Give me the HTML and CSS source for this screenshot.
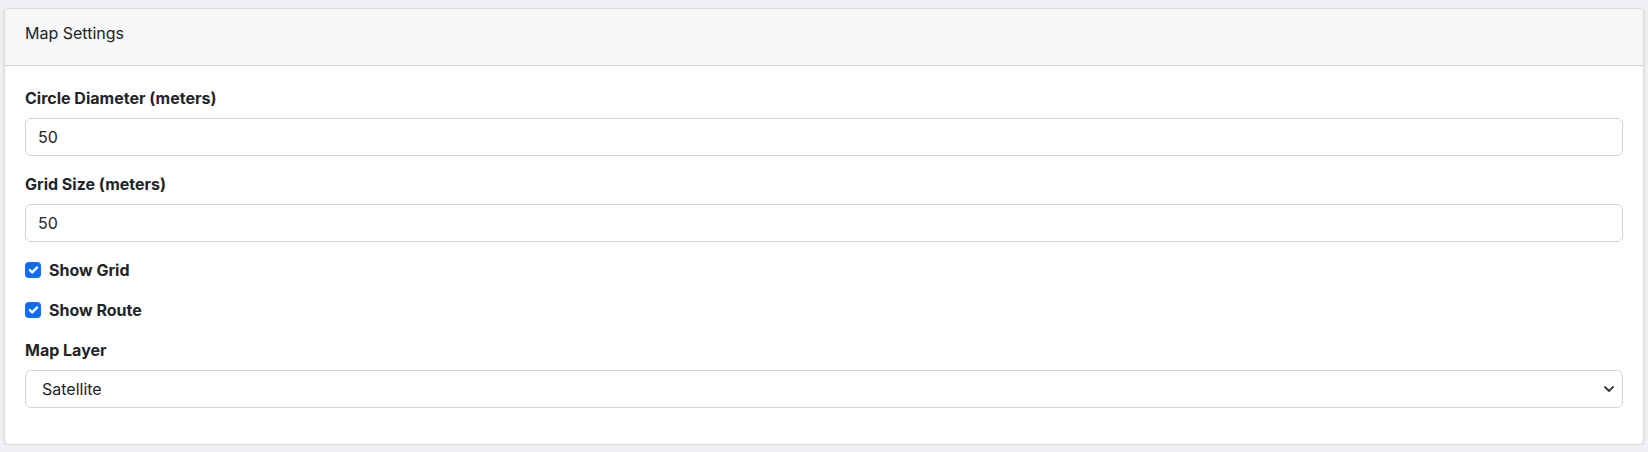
FILE: index.html
```html
<!DOCTYPE html>
<html lang="en">
<head>
<meta charset="utf-8">
<title>Map Settings</title>
<link rel="stylesheet" href="styles.css">
</head>
<body>
<div class="card">
  <div class="card-header">
    <h6 class="card-title">Map Settings</h6>
  </div>
  <div class="card-body">
    <div class="field">
      <label class="form-label" for="diam">Circle Diameter (meters)</label>
      <input class="form-control" id="diam" type="text" value="50">
    </div>
    <div class="field">
      <label class="form-label" for="grid">Grid Size (meters)</label>
      <input class="form-control" id="grid" type="text" value="50">
    </div>
    <label class="form-check">
      <input class="check-input" type="checkbox" checked>
      <span class="check-box"><svg viewBox="0 0 20 20" width="16" height="16"><path d="m6 10 3 3 6-6" fill="none" stroke="#fff" stroke-width="3" stroke-linecap="round" stroke-linejoin="round"/></svg></span>
      <span class="check-label">Show Grid</span>
    </label>
    <label class="form-check">
      <input class="check-input" type="checkbox" checked>
      <span class="check-box"><svg viewBox="0 0 20 20" width="16" height="16"><path d="m6 10 3 3 6-6" fill="none" stroke="#fff" stroke-width="3" stroke-linecap="round" stroke-linejoin="round"/></svg></span>
      <span class="check-label">Show Route</span>
    </label>
    <div class="field">
      <label class="form-label" for="layer">Map Layer</label>
      <div class="select-wrap">
        <select class="form-select" id="layer">
          <option>Satellite</option>
          <option>Streets</option>
          <option>Terrain</option>
        </select>
        <svg class="select-arrow" viewBox="0 0 10 6" width="10" height="6"><path d="M1 1l4 4 4-4" fill="none" stroke="#343a40" stroke-width="1.8" stroke-linecap="round" stroke-linejoin="round"/></svg>
      </div>
    </div>
  </div>
</div>
</body>
</html>
```

FILE: styles.css
```css
* { box-sizing: border-box; }
html, body { margin: 0; padding: 0; }
body {
  background: #eef0f3;
  font-family: Inter, "Liberation Sans", Arial, sans-serif;
  font-size: 16px;
  line-height: 1.5;
  color: #212529;
  padding: 8px 4px 0 4px;
}
.card {
  background: #fff;
  border: 1px solid rgba(0,0,0,.14);
  border-radius: 5px;
  box-shadow: 0 1px 3px rgba(0,0,0,.12);
  overflow: hidden;
}
.card-header {
  background: #f7f7f7;
  border-bottom: 1px solid rgba(0,0,0,.14);
  padding: 12px 20px;
}
.card-title {
  margin: 0 0 8px;
  font-size: 16px;
  font-weight: 400;
  line-height: 1.5;
}
.card-body { padding: 20px 20px; }
.field { margin-bottom: 16px; }
.form-label {
  display: block;
  font-weight: 700;
  margin-bottom: 8px;
}
.form-control, .form-select {
  display: block;
  width: 100%;
  height: 38px;
  padding: 6px 12px;
  font: inherit;
  color: #212529;
  background: #fff;
  border: 1px solid #ced4da;
  border-radius: 6px;
  outline: none;
}
.select-wrap { position: relative; }
.form-select {
  appearance: none;
  -webkit-appearance: none;
  padding-left: 16px;
  padding-right: 36px;
}
.select-arrow {
  position: absolute;
  right: 9px;
  top: 16px;
  pointer-events: none;
}
.form-check {
  display: flex;
  align-items: flex-start;
  min-height: 24px;
  margin-bottom: 16px;
  cursor: pointer;
}
.check-input {
  position: absolute;
  opacity: 0;
  width: 0;
  height: 0;
}
.check-box {
  flex: none;
  width: 16px;
  height: 16px;
  margin-top: 4px;
  margin-right: 8px;
  border-radius: 4px;
  background: #0d6efd;
  display: flex;
}
.check-label { font-weight: 700; }
```
